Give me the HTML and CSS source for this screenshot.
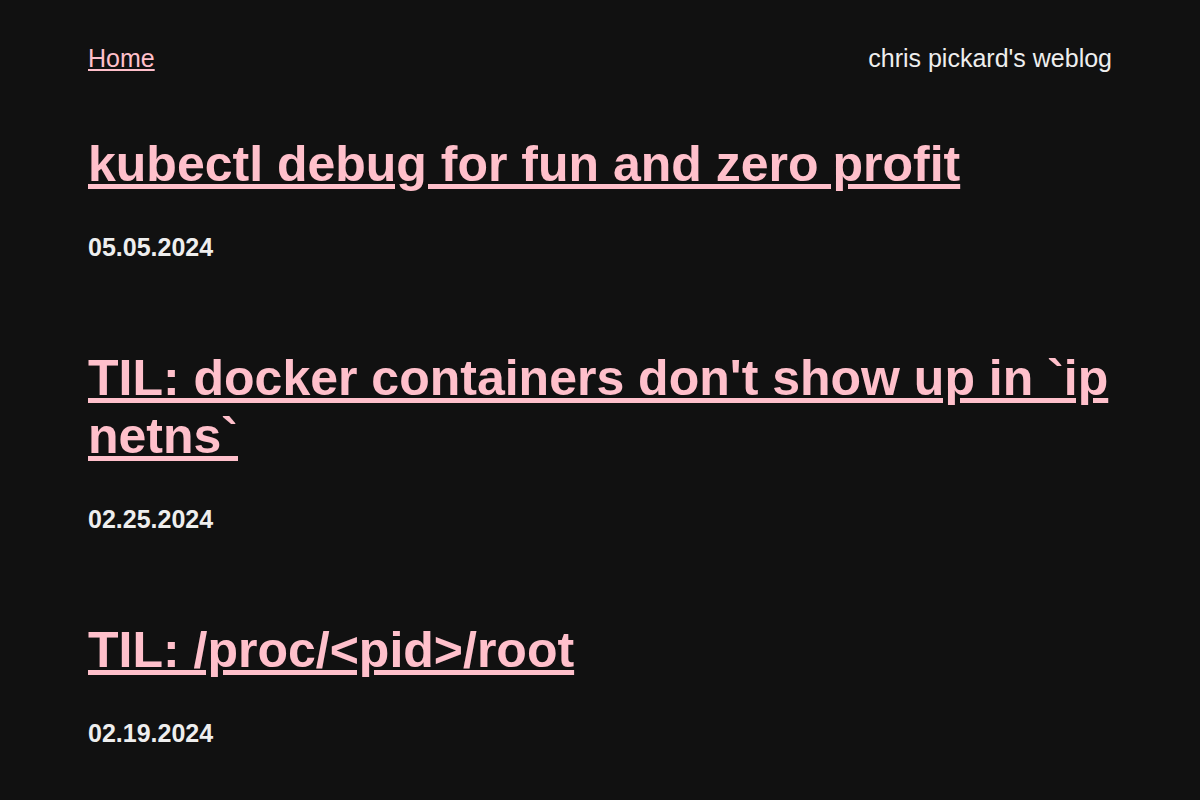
FILE: index.html
```html
<!DOCTYPE html>
<html lang="en">
<head>
<meta charset="UTF-8" />
<meta name="viewport" content="width=device-width, initial-scale=1" />
<title>chris pickard's weblog</title>
<link rel="stylesheet" href="styles.css">
</head>
<body>
<div class="wrapper">
  <header class="site-header">
    <a href="#">Home</a>
    <span class="site-title">chris pickard's weblog</span>
  </header>

  <main>
    <article class="post">
      <h2 class="post-title"><a href="#">kubectl debug for fun and zero profit</a></h2>
      <p class="post-date">05.05.2024</p>
    </article>

    <article class="post">
      <h2 class="post-title"><a href="#">TIL: docker containers don't show up in `ip netns`</a></h2>
      <p class="post-date">02.25.2024</p>
    </article>

    <article class="post">
      <h2 class="post-title"><a href="#">TIL: /proc/&lt;pid&gt;/root</a></h2>
      <p class="post-date">02.19.2024</p>
    </article>
  </main>
</div>
</body>
</html>
```

FILE: styles.css
```css
body {
  margin: 0;
  background: #111;
  color: #eee;
  font-family: "Liberation Sans", Arial, sans-serif;
  font-size: 25px;
}

a {
  color: pink;
}

.wrapper {
  max-width: 1024px;
  margin: 0 auto;
  padding-top: 44px;
}

.site-header {
  display: flex;
  justify-content: space-between;
  align-items: baseline;
  margin-bottom: 62px;
}

.post {
  margin-bottom: 87px;
}

.post-title {
  font-size: 50px;
  font-weight: bold;
  margin: 0 0 40px;
}

.post-date {
  font-weight: bold;
  margin: 0;
}
```
